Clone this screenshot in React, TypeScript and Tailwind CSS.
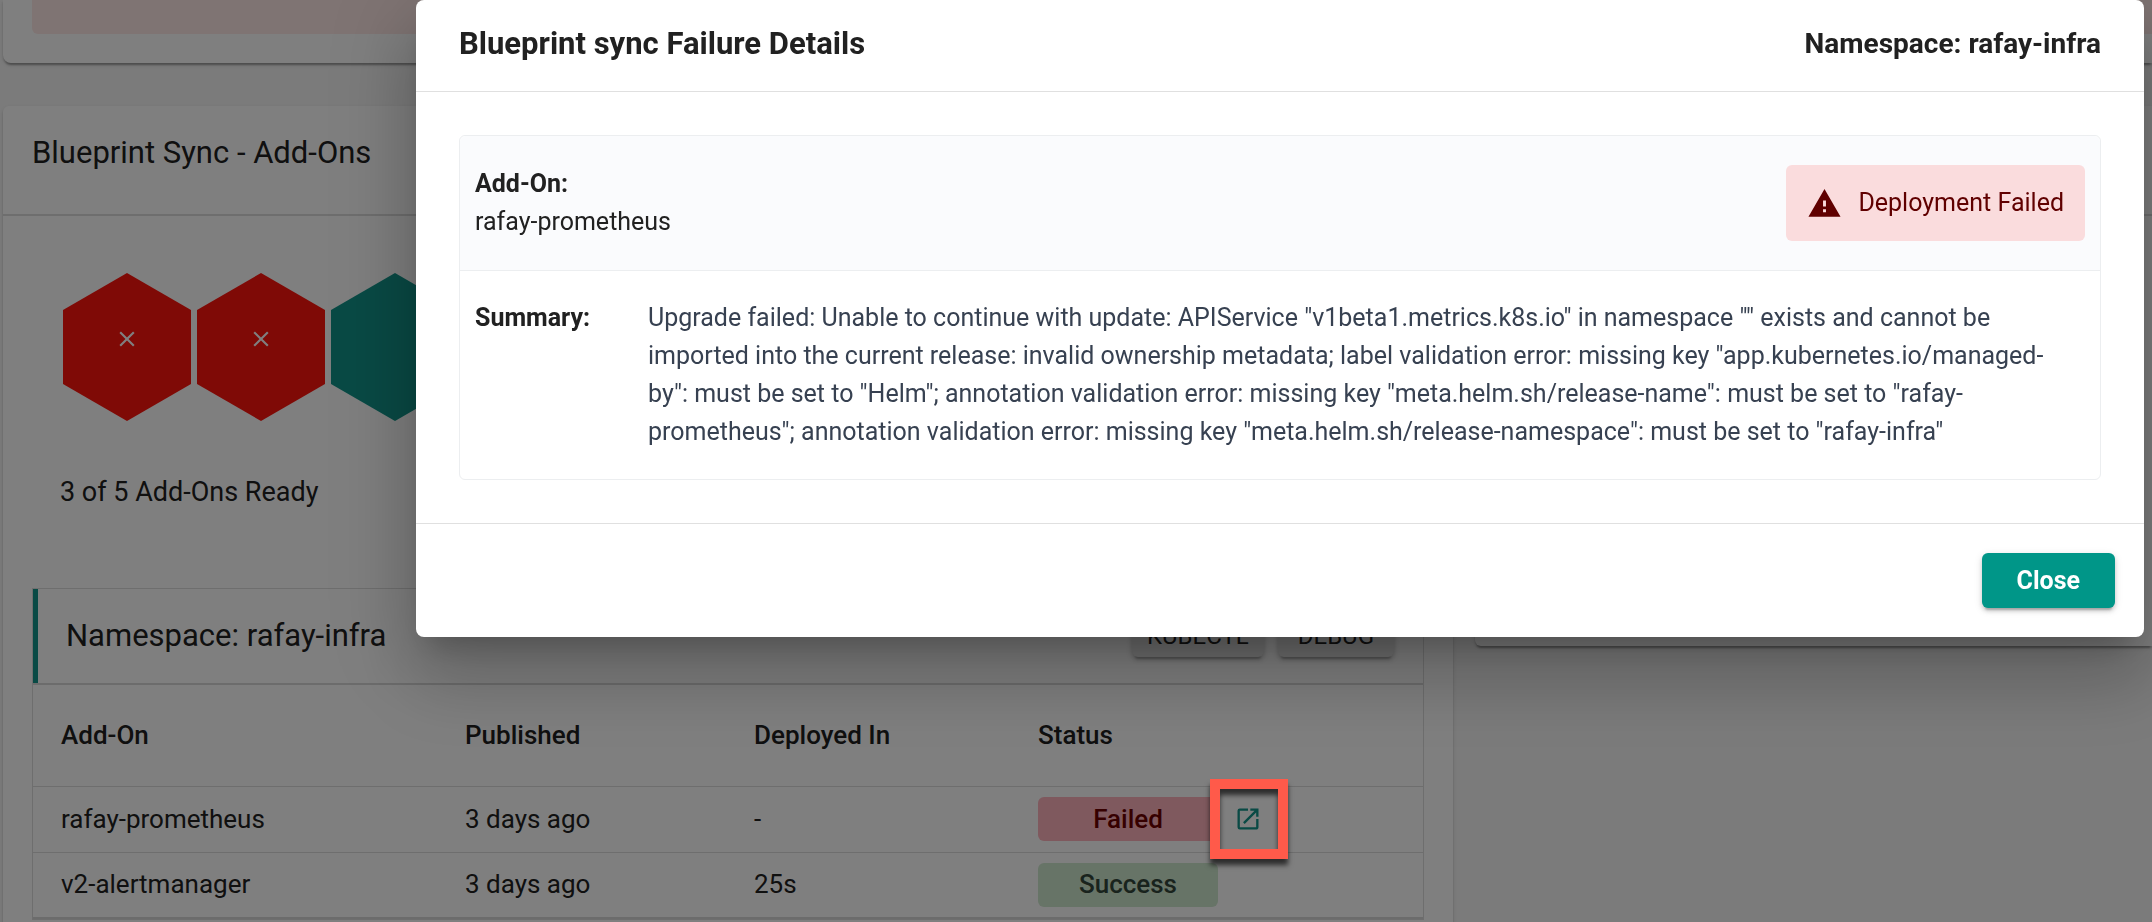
import React from 'react';
import { MdClose, MdOpenInNew, MdWarning } from 'react-icons/md';

interface AddOn {
  name: string;
  published: string;
  deployedIn: string;
  status: 'Failed' | 'Success';
}

const NAMESPACE = 'rafay-infra';

const addOns: AddOn[] = [
  { name: 'rafay-prometheus', published: '3 days ago', deployedIn: '-', status: 'Failed' },
  { name: 'v2-alertmanager', published: '3 days ago', deployedIn: '25s', status: 'Success' },
];

const hexagons = [false, false, true, true, true];

const cardShadow =
  'shadow-[0_4px_2px_-2px_rgba(0,0,0,0.2),0_2px_2px_0_rgba(0,0,0,0.14),0_2px_5px_0_rgba(0,0,0,0.12)]';
const buttonShadow =
  'shadow-[0_5px_2px_-3px_rgba(0,0,0,0.2),0_3px_4px_0_rgba(0,0,0,0.14),0_2px_8px_0_rgba(0,0,0,0.12)]';

const Hexagon: React.FC<{ ready: boolean }> = ({ ready }) => (
  <div className="grid h-[148px] w-32 shrink-0">
    <svg
      viewBox="0 0 128 148"
      className={`col-start-1 row-start-1 ${ready ? 'fill-[#12948a]' : 'fill-[#ff140c]'}`}
    >
      <polygon points="64,0 128,37 128,111 64,148 0,111 0,37" />
    </svg>
    {!ready && (
      <MdClose className="col-start-1 row-start-1 mt-[53px] size-[26px] justify-self-center text-white" />
    )}
  </div>
);

const StatusBadge: React.FC<{ status: AddOn['status'] }> = ({ status }) => (
  <span
    className={`flex h-11 w-[180px] items-center justify-center rounded-md font-medium ${
      status === 'Failed' ? 'bg-[#ffb3bc] text-[#6d0000]' : 'bg-[#cfe8cf] text-[#33463a]'
    }`}
  >
    {status}
  </span>
);

const AddOnTable: React.FC = () => (
  <table className="w-full table-fixed border-b-2 border-[#d8d8d8] text-left text-[26px]">
    <thead>
      <tr className="h-[101px] border-b border-[#dcdcdc]">
        <th className="w-[404px] pl-7 font-medium">Add-On</th>
        <th className="w-[289px] pl-7 font-medium">Published</th>
        <th className="w-[284px] pl-7 font-medium">Deployed In</th>
        <th className="pl-7 font-medium">Status</th>
      </tr>
    </thead>
    <tbody>
      {addOns.map((addOn) => (
        <tr key={addOn.name} className="h-[66px] border-b border-[#dcdcdc] last:border-b-0">
          <td className="pl-7">{addOn.name}</td>
          <td className="pl-7">{addOn.published}</td>
          <td className="pl-7">{addOn.deployedIn}</td>
          <td className="pl-7">
            <div className="flex items-center gap-4">
              <StatusBadge status={addOn.status} />
              {addOn.status === 'Failed' && (
                <button type="button" aria-label="Show failure details" className="relative text-[#12948a]">
                  <MdOpenInNew className="size-7" />
                  {/* callout stays bright above the backdrop */}
                  <span className="absolute -inset-y-[26px] -right-[26px] -left-6 z-20 border-10 border-[#ff5a4a] shadow-[0_6px_5px_rgba(0,0,0,0.65),inset_0_6px_5px_rgba(0,0,0,0.65)]" />
                </button>
              )}
            </div>
          </td>
        </tr>
      ))}
    </tbody>
  </table>
);

const AddOnsCard: React.FC = () => (
  <section className={`w-[1450px] shrink-0 rounded-md bg-white ${cardShadow}`}>
    <header className="border-b-2 border-[#dcdcdc] px-[29px] pt-6 pb-[39px]">
      <h2 className="text-[31px] leading-[45px]">Blueprint Sync - Add-Ons</h2>
    </header>
    <div className="px-[29px] pt-[57px] pb-16">
      <div className="flex gap-[6px] pl-[31px]">
        {hexagons.map((ready, index) => (
          <Hexagon key={index} ready={ready} />
        ))}
      </div>
      <p className="mt-[50px] pl-7 text-[27px] leading-[42px]">3 of 5 Add-Ons Ready</p>
      <div className="mt-[75px] border border-[#dcdcdc]">
        <div className="flex h-24 items-center justify-between border-b-2 border-[#d8d8d8]">
          <div className="flex h-full items-center border-l-[5px] border-[#12948a] pl-7">
            <h3 className="text-[31px]">Namespace: {NAMESPACE}</h3>
          </div>
          <div className="flex gap-[14px] pr-[29px] text-[24px]">
            <button type="button" className={`h-[42px] rounded-md bg-[#e0e0e0] px-[15px] ${buttonShadow}`}>
              KUBECTL
            </button>
            <button type="button" className={`h-[42px] rounded-md bg-[#e0e0e0] px-5 ${buttonShadow}`}>
              DEBUG
            </button>
          </div>
        </div>
        <AddOnTable />
      </div>
    </div>
  </section>
);

const FailureDialog: React.FC = () => (
  <div
    role="dialog"
    aria-modal="true"
    aria-labelledby="failure-title"
    className="relative z-30 mr-2 ml-[416px] flex-1 rounded-lg bg-white shadow-[0_20px_27px_-13px_rgba(0,0,0,0.2),0_43px_68px_5px_rgba(0,0,0,0.14),0_16px_83px_14px_rgba(0,0,0,0.12)]"
  >
    <header className="flex h-[92px] items-center justify-between border-b border-[#e0e0e0] px-[43px] pb-[3px] font-bold">
      <h1 id="failure-title" className="text-[31px]">
        Blueprint sync Failure Details
      </h1>
      <p className="text-[28px]">Namespace: {NAMESPACE}</p>
    </header>
    <div className="px-[43px] py-[43px] text-[25px] leading-[38px]">
      <div className="rounded-md border border-[#eceef0]">
        <div className="flex items-center justify-between rounded-t-md border-b border-[#eceef0] bg-[#fafbfd] px-[15px] py-[29px]">
          <div>
            <p className="font-bold">Add-On:</p>
            <p>rafay-prometheus</p>
          </div>
          <div className="flex h-[76px] items-center gap-4 rounded-md bg-[#fadcdd] px-[21px] text-[#600000]">
            <MdWarning className="size-[35px]" />
            <span>Deployment Failed</span>
          </div>
        </div>
        <div className="flex px-[15px] pt-7 pb-7">
          <p className="w-[173px] shrink-0 font-bold">Summary:</p>
          <p className="pr-5 text-[#374151]">
            Upgrade failed: Unable to continue with update: APIService "v1beta1.metrics.k8s.io" in namespace ""
            exists and cannot be imported into the current release: invalid ownership metadata; label validation
            error: missing key "app.kubernetes.io/managed-by": must be set to "Helm"; annotation validation error:
            missing key "meta.helm.sh/release-name": must be set to "rafay-prometheus"; annotation validation
            error: missing key "meta.helm.sh/release-namespace": must be set to "rafay-infra"
          </p>
        </div>
      </div>
    </div>
    <footer className="flex justify-end border-t border-[#e0e0e0] px-[29px] py-[29px]">
      <button
        type="button"
        className={`h-[55px] rounded-md bg-[#009688] px-[35px] text-[25px] font-bold text-white ${buttonShadow}`}
      >
        Close
      </button>
    </footer>
  </div>
);

export default function App() {
  return (
    <div className="h-screen overflow-hidden bg-[#f7f7f7] font-[Roboto,sans-serif] text-[#212121]">
      <main className="pl-[3px]">
        <section className={`rounded-bl-lg bg-white pb-[29px] pl-[29px] ${cardShadow}`}>
          <div className="h-[34px] rounded-bl-md bg-[#ffe8e6]" />
        </section>
        <div className="mt-[43px] flex items-start gap-[22px]">
          <AddOnsCard />
          <section className={`h-[540px] flex-1 rounded-l-md bg-white ${cardShadow}`}>
            <div className="h-[110px] border-b-2 border-[#dcdcdc]" />
          </section>
        </div>
      </main>
      <div className="fixed inset-0 z-10 bg-black/50" />
      <div className="fixed inset-x-0 top-0 z-30 flex items-start">
        <FailureDialog />
      </div>
    </div>
  );
}
